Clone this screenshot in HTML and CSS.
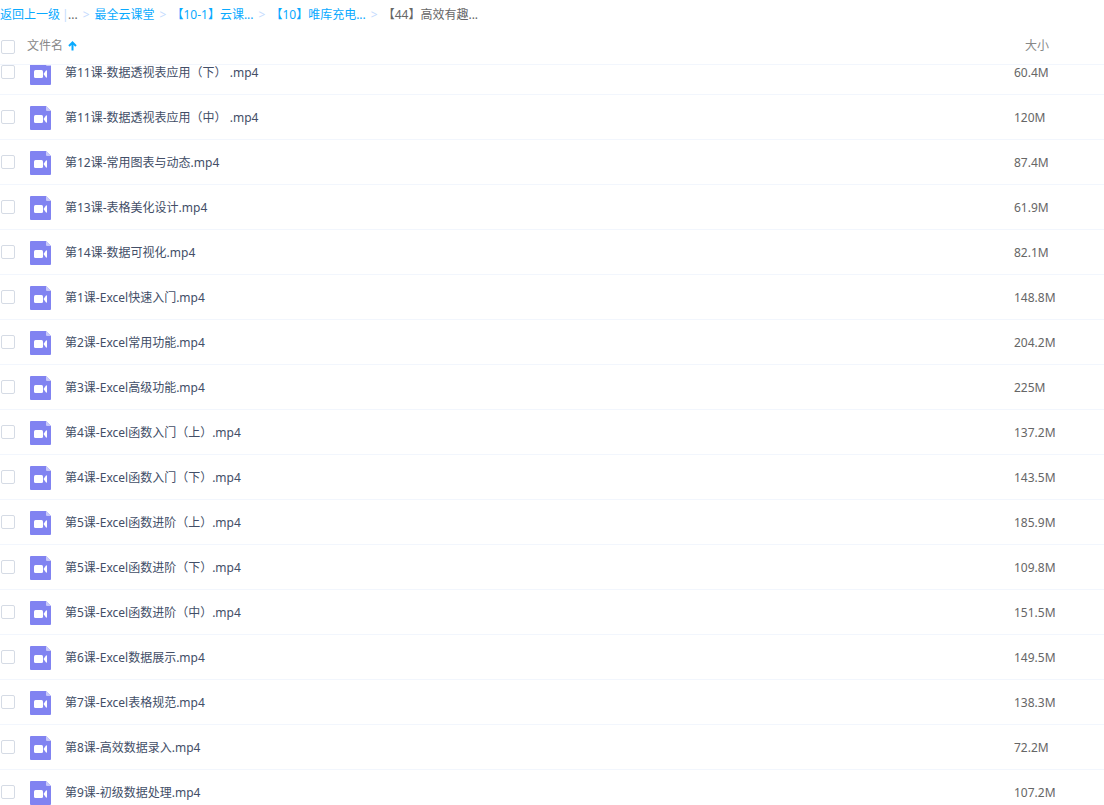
FILE: index.html
```
<!DOCTYPE html>
<html lang="zh-CN">
<head>
  <meta charset="utf-8">
  <title>文件列表</title>
  <link rel="stylesheet" href="styles.css">
</head>
<body>
  <svg class="sprite" aria-hidden="true">
    <symbol id="video" viewBox="0 0 21 24">
      <path fill="#8183f1" d="M1 0H16L21 5V23Q21 24 20 24H1Q0 24 0 23V1Q0 0 1 0Z"/>
      <path fill="#c9caf9" d="M16 0L21 5H17Q16 5 16 4Z"/>
      <rect fill="#fff" x="4" y="9" width="9" height="8" rx="1.500"/>
      <path fill="#fff" d="M13.500 13L16 9.500Q17 9 17 10V16Q17 17 16 16.500Z"/>
    </symbol>
  </svg>
  <nav class="path">
    <a href="#">返回上一级</a>
    <span class="line">|</span>
    <span>...</span>
    <span class="sep">&gt;</span>
    <a href="#">最全云课堂</a>
    <span class="sep">&gt;</span>
    <a href="#">【10-1】云课...</a>
    <span class="sep">&gt;</span>
    <a href="#">【10】唯库充电...</a>
    <span class="sep">&gt;</span>
    <span>【44】高效有趣...</span>
  </nav>
  <div class="list" id="list">
    <table>
      <thead>
        <tr>
          <th class="check"><input type="checkbox" aria-label="全选"></th>
          <th class="title">文件名
            <svg class="arrow" viewBox="0 0 9 10"><path d="M4.500 9.500V2M1 5L4.500 1.500L8 5" fill="none" stroke="#09aaff" stroke-width="2"/></svg>
          </th>
          <th class="size">大小</th>
        </tr>
      </thead>
      <tbody>
        <tr>
          <td class="check"><input type="checkbox" id="f1"></td>
          <td class="name"><label for="f1"><svg class="icon"><use href="#video"/></svg>第11课-数据透视表应用（下） .mp4</label></td>
          <td class="size">60.4M</td>
        </tr>
        <tr>
          <td class="check"><input type="checkbox" id="f2"></td>
          <td class="name"><label for="f2"><svg class="icon"><use href="#video"/></svg>第11课-数据透视表应用（中） .mp4</label></td>
          <td class="size">120M</td>
        </tr>
        <tr>
          <td class="check"><input type="checkbox" id="f3"></td>
          <td class="name"><label for="f3"><svg class="icon"><use href="#video"/></svg>第12课-常用图表与动态.mp4</label></td>
          <td class="size">87.4M</td>
        </tr>
        <tr>
          <td class="check"><input type="checkbox" id="f4"></td>
          <td class="name"><label for="f4"><svg class="icon"><use href="#video"/></svg>第13课-表格美化设计.mp4</label></td>
          <td class="size">61.9M</td>
        </tr>
        <tr>
          <td class="check"><input type="checkbox" id="f5"></td>
          <td class="name"><label for="f5"><svg class="icon"><use href="#video"/></svg>第14课-数据可视化.mp4</label></td>
          <td class="size">82.1M</td>
        </tr>
        <tr>
          <td class="check"><input type="checkbox" id="f6"></td>
          <td class="name"><label for="f6"><svg class="icon"><use href="#video"/></svg>第1课-Excel快速入门.mp4</label></td>
          <td class="size">148.8M</td>
        </tr>
        <tr>
          <td class="check"><input type="checkbox" id="f7"></td>
          <td class="name"><label for="f7"><svg class="icon"><use href="#video"/></svg>第2课-Excel常用功能.mp4</label></td>
          <td class="size">204.2M</td>
        </tr>
        <tr>
          <td class="check"><input type="checkbox" id="f8"></td>
          <td class="name"><label for="f8"><svg class="icon"><use href="#video"/></svg>第3课-Excel高级功能.mp4</label></td>
          <td class="size">225M</td>
        </tr>
        <tr>
          <td class="check"><input type="checkbox" id="f9"></td>
          <td class="name"><label for="f9"><svg class="icon"><use href="#video"/></svg>第4课-Excel函数入门（上）.mp4</label></td>
          <td class="size">137.2M</td>
        </tr>
        <tr>
          <td class="check"><input type="checkbox" id="f10"></td>
          <td class="name"><label for="f10"><svg class="icon"><use href="#video"/></svg>第4课-Excel函数入门（下）.mp4</label></td>
          <td class="size">143.5M</td>
        </tr>
        <tr>
          <td class="check"><input type="checkbox" id="f11"></td>
          <td class="name"><label for="f11"><svg class="icon"><use href="#video"/></svg>第5课-Excel函数进阶（上）.mp4</label></td>
          <td class="size">185.9M</td>
        </tr>
        <tr>
          <td class="check"><input type="checkbox" id="f12"></td>
          <td class="name"><label for="f12"><svg class="icon"><use href="#video"/></svg>第5课-Excel函数进阶（下）.mp4</label></td>
          <td class="size">109.8M</td>
        </tr>
        <tr>
          <td class="check"><input type="checkbox" id="f13"></td>
          <td class="name"><label for="f13"><svg class="icon"><use href="#video"/></svg>第5课-Excel函数进阶（中）.mp4</label></td>
          <td class="size">151.5M</td>
        </tr>
        <tr>
          <td class="check"><input type="checkbox" id="f14"></td>
          <td class="name"><label for="f14"><svg class="icon"><use href="#video"/></svg>第6课-Excel数据展示.mp4</label></td>
          <td class="size">149.5M</td>
        </tr>
        <tr>
          <td class="check"><input type="checkbox" id="f15"></td>
          <td class="name"><label for="f15"><svg class="icon"><use href="#video"/></svg>第7课-Excel表格规范.mp4</label></td>
          <td class="size">138.3M</td>
        </tr>
        <tr>
          <td class="check"><input type="checkbox" id="f16"></td>
          <td class="name"><label for="f16"><svg class="icon"><use href="#video"/></svg>第8课-高效数据录入.mp4</label></td>
          <td class="size">72.2M</td>
        </tr>
        <tr>
          <td class="check"><input type="checkbox" id="f17"></td>
          <td class="name"><label for="f17"><svg class="icon"><use href="#video"/></svg>第9课-初级数据处理.mp4</label></td>
          <td class="size">107.2M</td>
        </tr>
      </tbody>
    </table>
  </div>
  <script>
    // 列表滚动位置
    document.getElementById('list').scrollTop = 15
  </script>
</body>
</html>
```
FILE: styles.css
```
* {
  margin: 0;
  padding: 0;
  box-sizing: border-box;
}
body {
  display: flex;
  flex-direction: column;
  height: 100vh;
  background: #fff;
  color: #666;
  font: 12px/18px "Noto Sans", "Noto Sans CJK SC", sans-serif;
}
.sprite {
  position: absolute;
  width: 0;
  height: 0;
}
.path {
  display: flex;
  flex: none;
  gap: 5px;
  height: 30px;
  line-height: 30px;
  white-space: nowrap;
}
.path a {
  color: #09aaff;
  text-decoration: none;
}
.path .line {
  width: 4px;
  margin: 0 -3px 0 -3px;
  color: #c4dbfe;
}
.path .sep {
  color: #c4dbfe;
}
.list {
  flex: 1;
  min-height: 0;
  overflow-y: auto;
  scrollbar-width: none;
}
table {
  width: 100%;
  table-layout: fixed;
  border-spacing: 0;
}
th {
  position: sticky;
  top: 0;
  height: 35px;
  padding-bottom: 2px;
  background: #fff;
  border-bottom: 1px solid #f2f6fd;
  color: #888;
  font-weight: normal;
  text-align: left;
}
td {
  height: 45px;
  border-bottom: 1px solid #f2f6fd;
}
.check {
  width: 27px;
  padding-left: 1px;
}
.check input {
  display: block;
  appearance: none;
  width: 14px;
  height: 14px;
  border: 1px solid #d5dbe5;
  border-radius: 2px;
  background: #fff;
}
.check input:checked {
  background: #09aaff;
}
th.check {
  padding-bottom: 10px;
  vertical-align: bottom;
}
.arrow {
  width: 9px;
  height: 10px;
  margin-left: 2px;
  vertical-align: -1px;
}
.name {
  padding-left: 3px;
  color: #424e67;
}
.name label {
  display: flex;
  align-items: center;
  padding-top: 2px;
}
.icon {
  width: 21px;
  height: 24px;
  margin-right: 14px;
}
.size {
  width: 90px;
}
td.size {
  padding-top: 2px;
}
th.size {
  padding-left: 11px;
}
```
